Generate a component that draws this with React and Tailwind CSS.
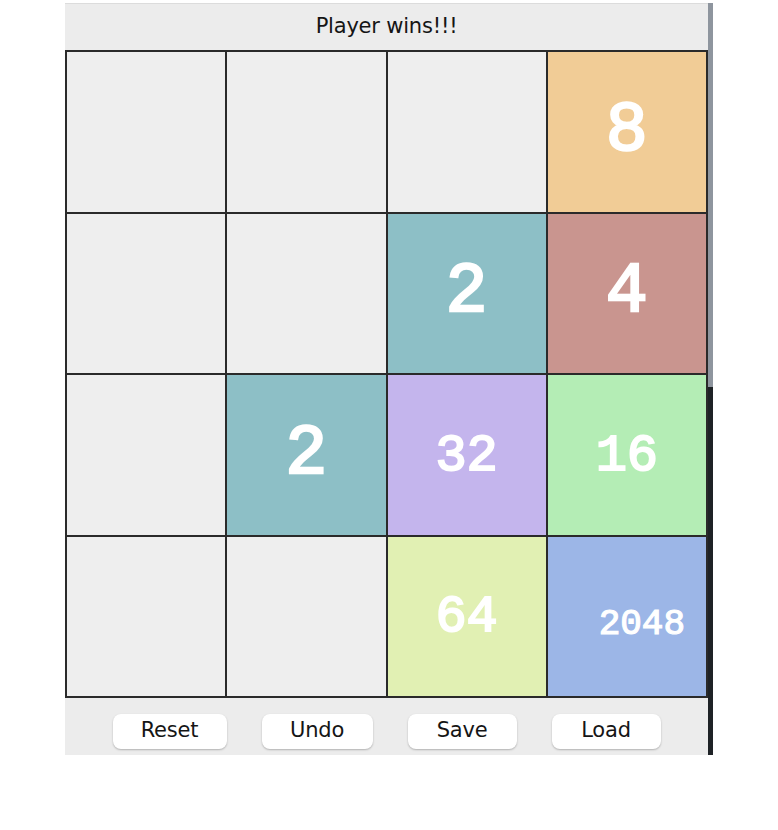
import React from 'react';

// board state, row by row; 0 = empty
const board = [
  [0, 0, 0, 8],
  [0, 0, 2, 4],
  [0, 2, 32, 16],
  [0, 0, 64, 2048],
];

const tileColors = {
  0: 'bg-[#eeeeee]',
  2: 'bg-[#8dbfc6]',
  4: 'bg-[#c9958f]',
  8: 'bg-[#f1cc96]',
  16: 'bg-[#b4edb5]',
  32: 'bg-[#c4b5ed]',
  64: 'bg-[#e1f0b3]',
  2048: 'bg-[#9cb6e7]',
};

const textSize = (value) => {
  if (value < 10) return 'text-[70px] [-webkit-text-stroke:2.5px_white]';
  if (value < 100) return 'text-[52px] pt-[4px] [-webkit-text-stroke:2px_white]';
  return 'text-[36px] pl-[30px] pt-[18px] [-webkit-text-stroke:1.2px_white]';
};

const Tile = ({ value }) => (
  <div
    className={`h-[161.5px] border border-[#2a2a2a] flex items-center justify-center ${tileColors[value]}`}
  >
    {value > 0 && (
      <span
        className={`text-white leading-none ${textSize(value)}`}
        style={{ fontFamily: '"Liberation Mono", monospace' }}
      >
        {value}
      </span>
    )}
  </div>
);

const buttons = [
  { label: 'Reset', w: 'w-[114px]' },
  { label: 'Undo', w: 'w-[111px]' },
  { label: 'Save', w: 'w-[109px]' },
  { label: 'Load', w: 'w-[109px]' },
];

export default function App() {
  return (
    <div className="w-[778px] h-[830px] bg-white" style={{ fontFamily: '"DejaVu Sans", "Open Sans", sans-serif' }}>
      <div className="flex ml-[65px] pt-[3px]">
        <div className="w-[643px] bg-[#ececec]">
          {/* status bar */}
          <div className="h-[47px] flex items-center justify-center border-t border-[#dcdcdc]">
            <span className="text-[21px] text-[#151515] tracking-[-0.2px]">Player wins!!!</span>
          </div>

          {/* board */}
          <div className="grid grid-cols-4 border border-[#2a2a2a]">
            {board.flat().map((value, i) => (
              <Tile key={i} value={value} />
            ))}
          </div>

          {/* controls */}
          <div className="h-[57px] flex justify-center gap-[35px] pt-[16px]">
            {buttons.map((b) => (
              <button
                key={b.label}
                className={`${b.w} h-[35px] pb-[3px] bg-white rounded-[8px] shadow-[0_1px_2px_rgba(0,0,0,0.25)] text-[21px] leading-none text-[#151515] tracking-[-0.2px]`}
              >
                {b.label}
              </button>
            ))}
          </div>
        </div>

        {/* window edge */}
        <div className="w-[5px] flex flex-col">
          <div className="h-[384px] bg-[#8e959e]" />
          <div className="flex-1 bg-[#1e2226]" />
        </div>
      </div>
    </div>
  );
}
